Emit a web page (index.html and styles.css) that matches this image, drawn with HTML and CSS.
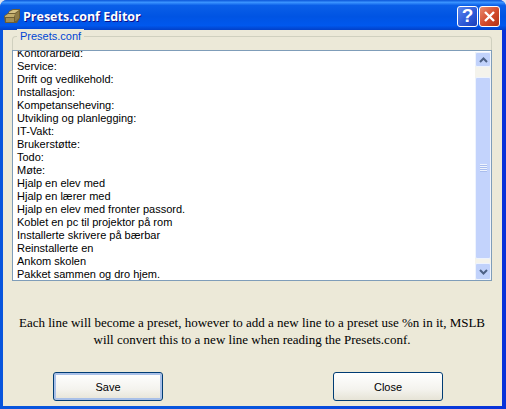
FILE: index.html
```html
<!DOCTYPE html>
<html>
<head>
    <title>Presets.conf Editor</title>
    <link rel="stylesheet" href="styles.css">
</head>
<body>
    <div class="window">
        <div class="title-bar">
            <svg class="app-icon" width="17" height="15" viewBox="0 0 17 15">
                <path d="M0 7 L4 4 L5 2 L9 0 L16 0 L16 9 L13 14 L1 14 Z" fill="#6f5e33"/>
                <path d="M5 3 L9 1 L15 1 L11 4 L5 4 Z" fill="#d4c184"/>
                <path d="M1 7 L4 5 L11 5 L10 8 L1 8 Z" fill="#c2ad6c"/>
                <path d="M11 5 L15 2 L15 9 L12 12 L11 12 Z" fill="#8d7b47"/>
                <path d="M2 9 L10 9 L10 13 L2 13 Z" fill="#a18e56"/>
            </svg>
            <span class="title-text">Presets.conf Editor</span>
            <div class="title-btn help-btn">?</div>
            <div class="title-btn close-btn">
                <svg width="13" height="13" viewBox="0 0 13 13">
                    <path d="M2 2 L11 11 M11 2 L2 11" stroke="#fff" stroke-width="2.4"/>
                </svg>
            </div>
        </div>
        <div class="content">
            <div class="group-box">
                <span class="group-label">Presets.conf</span>
                <div class="text-area">
                    <div class="lines">
                        <div>Kontorarbeid:</div>
                        <div>Service:</div>
                        <div>Drift og vedlikehold:</div>
                        <div>Installasjon:</div>
                        <div>Kompetanseheving:</div>
                        <div>Utvikling og planlegging:</div>
                        <div>IT-Vakt:</div>
                        <div>Brukerstøtte:</div>
                        <div>Todo:</div>
                        <div>Møte:</div>
                        <div>Hjalp en elev med</div>
                        <div>Hjalp en lærer med</div>
                        <div>Hjalp en elev med fronter passord.</div>
                        <div>Koblet en pc til projektor på rom</div>
                        <div>Installerte skrivere på bærbar</div>
                        <div>Reinstallerte en</div>
                        <div>Ankom skolen</div>
                        <div>Pakket sammen og dro hjem.</div>
                    </div>
                    <div class="scrollbar">
                        <div class="scroll-btn">
                            <svg width="9" height="6" viewBox="0 0 9 6"><path d="M1 5 L4.5 1.5 L8 5" fill="none" stroke="#4d6185" stroke-width="2"/></svg>
                        </div>
                        <div class="scroll-thumb">
                            <div class="grip"></div>
                        </div>
                        <div class="scroll-btn scroll-btn-down">
                            <svg width="9" height="6" viewBox="0 0 9 6"><path d="M1 1 L4.5 4.5 L8 1" fill="none" stroke="#4d6185" stroke-width="2"/></svg>
                        </div>
                    </div>
                </div>
            </div>
            <p class="note">Each line will become a preset, however to add a new line to a preset use %n in it, MSLB<br>will convert this to a new line when reading the Presets.conf.</p>
            <div class="button-row">
                <button class="default-btn">Save</button>
                <button>Close</button>
            </div>
        </div>
    </div>
</body>
</html>
```

FILE: styles.css
```css
* {
    margin: 0;
    padding: 0;
    box-sizing: border-box;
}

html, body {
    width: 100%;
    height: 100%;
    overflow: hidden;
    background-color: #dfe3ee;
}

.window {
    display: flex;
    flex-direction: column;
    width: 506px;
    height: 409px;
    border-radius: 7px 7px 0 0;
    background: linear-gradient(to right, #0855dd 0, #0855dd 50%, #0831d9 100%);
    overflow: hidden;
}

/* Luna title bar */
.title-bar {
    display: flex;
    align-items: center;
    height: 30px;
    padding: 2px 6px 0 4px;
    background: linear-gradient(to bottom, #0a55d8 0%, #3a93ff 8%, #0a5fe8 18%, #0054e3 55%, #0058ee 85%, #0240c8 100%);
}

.app-icon {
    margin-right: 2px;
}

.title-text {
    flex: 1;
    padding-top: 1px;
    color: #ffffff;
    font-family: "Open Sans", sans-serif;
    font-size: 12.5px;
    font-weight: bold;
    text-shadow: 1px 1px 0 #0f1089;
}

.title-btn {
    display: flex;
    justify-content: center;
    align-items: center;
    width: 21px;
    height: 21px;
    margin-left: 1px;
    border: 1px solid #ffffff;
    border-radius: 3px;
    color: #ffffff;
    font-family: "Liberation Sans", sans-serif;
    font-size: 19px;
    font-weight: bold;
}

.help-btn {
    background: linear-gradient(135deg, #5b86ee 0%, #2a57d6 60%, #1c3fb8 100%);
}

.close-btn {
    background: linear-gradient(135deg, #e98a6e 0%, #d2492a 55%, #b23214 100%);
}

.content {
    flex: 1;
    display: flex;
    flex-direction: column;
    margin: 0 4px 3px 3px;
    padding: 6px 10px 0 9px;
    background-color: #ece9d8;
}

.group-box {
    position: relative;
    height: 245px;
    padding-top: 13px;
    border: 1px solid #d0d0bf;
    border-bottom: none;
    border-radius: 4px 4px 0 0;
}

.group-label {
    position: absolute;
    top: -8px;
    left: 4px;
    padding: 0 3px;
    background-color: #ece9d8;
    color: #0046d5;
    font-family: "Liberation Sans", sans-serif;
    font-size: 11px;
    line-height: 15px;
}

.text-area {
    display: flex;
    height: 231px;
    margin: 0 -1px;
    overflow: hidden;
    border: 1px solid #7f9db9;
    background-color: #ffffff;
}

.lines {
    flex: 1;
    margin-top: -4px;
    padding-left: 4px;
    color: #000000;
    font-family: "Liberation Sans", sans-serif;
    font-size: 11px;
    line-height: 13px;
}

.scrollbar {
    display: flex;
    flex-direction: column;
    width: 16px;
    margin-top: 1px;
    background: #f4f3ec;
}

.scroll-btn {
    display: flex;
    justify-content: center;
    align-items: center;
    height: 15px;
    border: 1px solid #eef3fd;
    border-radius: 2px;
    background: #c1d2fb;
}

.scroll-btn-down {
    height: 17px;
}

.scroll-thumb {
    display: flex;
    justify-content: center;
    align-items: center;
    flex: 1;
    margin: 10px 0 4px;
    border: 1px solid #eef3fd;
    border-radius: 2px;
    background: #c3d3fc;
}

.grip {
    width: 7px;
    height: 8px;
    background: repeating-linear-gradient(to bottom, #eef3fd 0, #eef3fd 1px, #a9bdee 1px, #a9bdee 2px);
}

.note {
    margin-top: 33px;
    color: #000000;
    font-family: "Liberation Serif", serif;
    font-size: 13px;
    line-height: 17px;
    text-align: center;
    white-space: nowrap;
}

.button-row {
    display: flex;
    justify-content: space-between;
    margin-top: 24px;
    padding: 0 49px 0 41px;
}

button {
    width: 110px;
    height: 29px;
    border: 1px solid #003c74;
    border-radius: 3px;
    background: linear-gradient(to bottom, #ffffff 0%, #f4f3ee 60%, #e6e3d6 100%);
    color: #000000;
    font-family: "Liberation Sans", sans-serif;
    font-size: 11px;
}

.default-btn {
    box-shadow: inset 0 0 0 2px #a9c0e8;
}
```
